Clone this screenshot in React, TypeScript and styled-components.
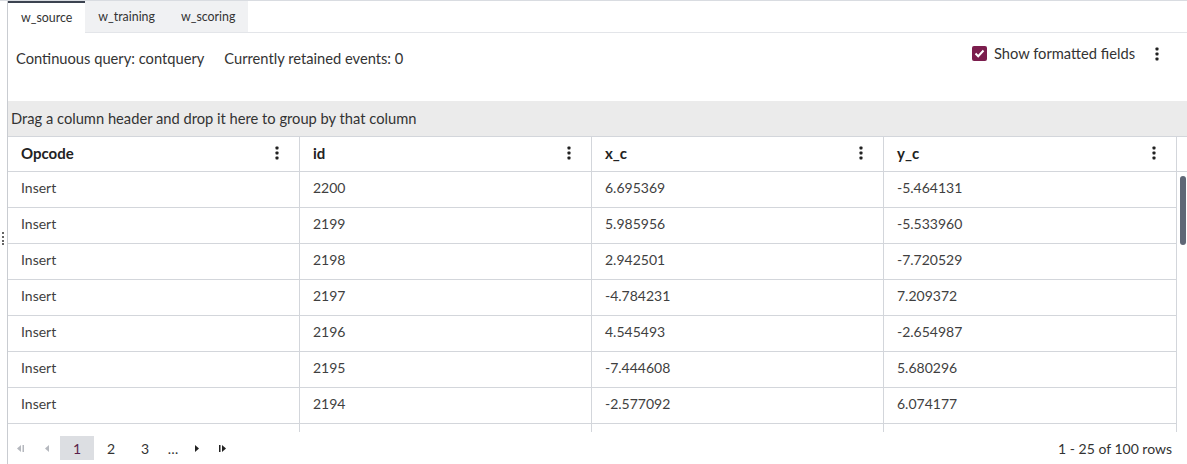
import React from "react";
import styled, { createGlobalStyle } from "styled-components";

const Global = createGlobalStyle`
  html, body { margin: 0; padding: 0; background: #fff; }
  body { font-family: Lato, "Noto Sans", sans-serif; color: #333; }
  * { box-sizing: border-box; }
`;

const Page = styled.div`
  width: 1187px;
  height: 464px;
  overflow: hidden;
  border-top: 1px solid #d9dce1;
  padding-left: 7px;
  position: relative;
`;

const Panel = styled.div`
  height: 100%;
  border-left: 1px solid #c9ccd1;
  display: flex;
  flex-direction: column;
`;

const TabBar = styled.div`
  display: flex;
  height: 32px;
  border-bottom: 1px solid #e3e5e9;
`;

const Tab = styled.div<{ $active?: boolean }>`
  padding: 0 13px 2px 13px;
  display: flex;
  align-items: center;
  font-size: 12.4px;
  color: #333;
  background: ${(p) => (p.$active ? "#fff" : "#f0f1f3")};
  border-top: 2px solid ${(p) => (p.$active ? "#3c4350" : "transparent")};
  margin-bottom: ${(p) => (p.$active ? "-1px" : "0")};
`;

const InfoRow = styled.div`
  height: 68px;
  display: flex;
  align-items: flex-start;
  padding: 13px 28px 0 8px;
`;

const InfoText = styled.span`
  font-size: 14.7px;
  margin-top: 3px;
  margin-right: 20px;
  color: #333;
`;

const Spacer = styled.div`
  flex: 1;
`;

const CheckWrap = styled.label`
  display: flex;
  align-items: center;
  gap: 7px;
  font-size: 14.7px;
  color: #333;
  margin-top: -2px;
`;

const Check = styled.span`
  width: 15px;
  height: 15px;
  border-radius: 2px;
  background: #7b1d4d;
  display: flex;
  align-items: center;
  justify-content: center;
`;

const MenuBtn = styled.span<{ $ml?: number }>`
  display: inline-flex;
  margin-left: ${(p) => p.$ml ?? 0}px;
  margin-top: 1px;
`;

const GroupPanel = styled.div`
  height: 35px;
  background: #ebebeb;
  display: flex;
  align-items: center;
  padding-left: 3px;
  padding-bottom: 1px;
  font-size: 14.7px;
  color: #333;
`;

const Grid = styled.div`
  display: grid;
  grid-template-columns: 292px 292px 292px 293px 10px;
`;

const HeadCell = styled.div<{ $last?: boolean }>`
  height: 36px;
  border-top: 1px solid #d3d6db;
  border-bottom: 1px solid #d3d6db;
  border-right: ${(p) => (p.$last ? "none" : "1px solid #d3d6db")};
  display: flex;
  align-items: center;
  justify-content: space-between;
  padding: 0 20px 2px 13px;
  font-weight: 700;
  font-size: 15px;
  color: #222;
`;

const Body = styled.div`
  height: 260px;
  overflow: hidden;
  position: relative;
`;

const Cell = styled.div<{ $gutter?: boolean }>`
  height: 36px;
  border-bottom: ${(p) => (p.$gutter ? "none" : "1px solid #d3d6db")};
  border-right: ${(p) => (p.$gutter ? "none" : "1px solid #d3d6db")};
  display: flex;
  align-items: center;
  padding: 0 0 5px 13px;
  font-size: 14px;
  color: #3f3f3f;
`;

const ScrollThumb = styled.div`
  position: absolute;
  right: 1px;
  top: 4px;
  width: 6px;
  height: 69px;
  border-radius: 3px;
  background: #5f6776;
`;

const Footer = styled.div`
  flex: 1;
  display: flex;
  align-items: center;
  padding: 0 15px 0 0;
`;

const Pager = styled.div`
  display: flex;
  align-items: center;
`;

const NavIcon = styled.span`
  width: 26px;
  height: 24px;
  display: inline-flex;
  align-items: center;
  justify-content: center;
`;

const PageNum = styled.span<{ $active?: boolean; $narrow?: boolean }>`
  min-width: ${(p) => (p.$narrow ? 22 : 34)}px;
  height: 24px;
  display: inline-flex;
  align-items: center;
  justify-content: center;
  font-size: 14px;
  color: ${(p) => (p.$active ? "#5a1f4a" : "#333")};
  background: ${(p) => (p.$active ? "#dcdee2" : "transparent")};
`;

const RowsInfo = styled.span`
  font-size: 14px;
  color: #333;
`;

const Grip = styled.div`
  position: absolute;
  left: 2px;
  top: 228px;
`;

const Kebab = ({ color = "#222" }: { color?: string }) => (
  <svg width="4" height="14" viewBox="0 0 4 14">
    <rect x="0.5" y="0.5" width="3" height="3" rx="0.8" fill={color} />
    <rect x="0.5" y="5.5" width="3" height="3" rx="0.8" fill={color} />
    <rect x="0.5" y="10.5" width="3" height="3" rx="0.8" fill={color} />
  </svg>
);

const rows: [string, string, string, string][] = [
  ["Insert", "2200", "6.695369", "-5.464131"],
  ["Insert", "2199", "5.985956", "-5.533960"],
  ["Insert", "2198", "2.942501", "-7.720529"],
  ["Insert", "2197", "-4.784231", "7.209372"],
  ["Insert", "2196", "4.545493", "-2.654987"],
  ["Insert", "2195", "-7.444608", "5.680296"],
  ["Insert", "2194", "-2.577092", "6.074177"],
  ["", "", "", ""],
];

export default function App() {
  return (
    <>
      <Global />
      <Page>
        <Grip>
          <svg width="3" height="13" viewBox="0 0 3 13">
            <rect x="0" y="0" width="2" height="2" fill="#666" />
            <rect x="0" y="4" width="2" height="2" fill="#666" />
            <rect x="0" y="8" width="2" height="2" fill="#666" />
            <rect x="0" y="11" width="2" height="2" fill="#666" />
          </svg>
        </Grip>
        <Panel>
          <TabBar>
            <Tab $active>w_source</Tab>
            <Tab>w_training</Tab>
            <Tab>w_scoring</Tab>
          </TabBar>
          <InfoRow>
            <InfoText>Continuous query: contquery</InfoText>
            <InfoText>Currently retained events: 0</InfoText>
            <Spacer />
            <CheckWrap>
              <Check>
                <svg width="11" height="9" viewBox="0 0 11 9">
                  <path d="M1.5 4.5 L4.2 7.2 L9.5 1.5" stroke="#fff" strokeWidth="2" fill="none" />
                </svg>
              </Check>
              Show formatted fields
            </CheckWrap>
            <MenuBtn $ml={20}>
              <Kebab />
            </MenuBtn>
          </InfoRow>
          <GroupPanel>Drag a column header and drop it here to group by that column</GroupPanel>
          <Grid>
            {["Opcode", "id", "x_c", "y_c"].map((h) => (
              <HeadCell key={h}>
                {h}
                <Kebab />
              </HeadCell>
            ))}
            <HeadCell $last />
          </Grid>
          <Body>
            <Grid>
              {rows.map((r, i) => (
                <React.Fragment key={i}>
                  {r.map((c, j) => (
                    <Cell key={j}>{c}</Cell>
                  ))}
                  <Cell $gutter />
                </React.Fragment>
              ))}
            </Grid>
            <ScrollThumb />
          </Body>
          <Footer>
            <Pager>
              <NavIcon>
                <svg width="8" height="7" viewBox="0 0 8 7">
                  <path d="M4 0 L0 3.5 L4 7 Z" fill="#b5b8be" />
                  <rect x="5.5" y="0" width="1.5" height="7" fill="#b5b8be" />
                </svg>
              </NavIcon>
              <NavIcon>
                <svg width="5" height="7" viewBox="0 0 5 7">
                  <path d="M4 0 L0 3.5 L4 7 Z" fill="#b5b8be" />
                </svg>
              </NavIcon>
              <PageNum $active>1</PageNum>
              <PageNum>2</PageNum>
              <PageNum>3</PageNum>
              <PageNum $narrow>…</PageNum>
              <NavIcon>
                <svg width="5" height="7" viewBox="0 0 5 7">
                  <path d="M0 0 L4 3.5 L0 7 Z" fill="#222" />
                </svg>
              </NavIcon>
              <NavIcon>
                <svg width="8" height="7" viewBox="0 0 8 7">
                  <rect x="0" y="0" width="1.5" height="7" fill="#222" />
                  <path d="M3 0 L7 3.5 L3 7 Z" fill="#222" />
                </svg>
              </NavIcon>
            </Pager>
            <Spacer />
            <RowsInfo>1 - 25 of 100 rows</RowsInfo>
          </Footer>
        </Panel>
      </Page>
    </>
  );
}
